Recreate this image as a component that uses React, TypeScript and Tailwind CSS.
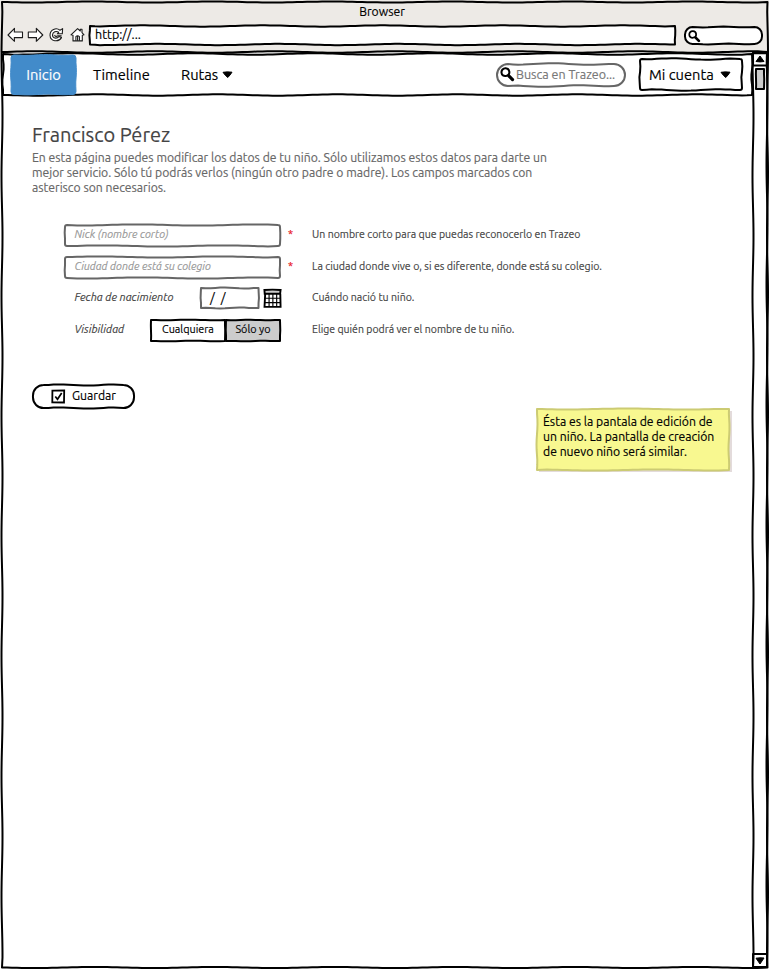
import type { ReactNode } from "react";

type SketchProps = {
  w: number;
  h: number;
  r?: number;
  amp?: number;
  seed?: number;
  stroke?: string;
  fill?: string;
  sw?: number;
};

// One hand-drawn side: sampled points that sway around the straight line.
function side(x1: number, y1: number, x2: number, y2: number, amp: number, seed: number): string {
  const len = Math.hypot(x2 - x1, y2 - y1);
  if (len < 1) return `L${x2} ${y2}`;
  const n = Math.max(2, Math.round(len / 5));
  const nx = -(y2 - y1) / len;
  const ny = (x2 - x1) / len;
  const wave = Math.min(120, Math.max(30, len * 0.7));
  let out = "";
  for (let i = 1; i <= n; i++) {
    const t = i / n;
    const taper = Math.min(1, (Math.min(t, 1 - t) * len) / 10);
    const o = Math.sin((t * len * 6.283) / wave + seed) * amp * taper;
    out += `L${(x1 + (x2 - x1) * t + nx * o).toFixed(2)} ${(y1 + (y2 - y1) * t + ny * o).toFixed(2)}`;
  }
  return out;
}

function framePath(w: number, h: number, r: number, amp: number, seed: number): string {
  const a = 1;
  const R = w - 1;
  const B = h - 1;
  const arc = r > 0 ? `A${r} ${r} 0 0 1 ` : "L";
  return (
    `M${a + r} ${a}` +
    side(a + r, a, R - r, a, amp, seed) +
    `${arc}${R} ${a + r}` +
    side(R, a + r, R, B - r, amp, seed + 2) +
    `${arc}${R - r} ${B}` +
    side(R - r, B, a + r, B, amp, seed + 4) +
    `${arc}${a} ${B - r}` +
    side(a, B - r, a, a + r, amp, seed + 1) +
    `${arc}${a + r} ${a}Z`
  );
}

function Sketch({ w, h, r = 0, amp = 0.7, seed = 0, stroke = "#000", fill = "none", sw = 2 }: SketchProps) {
  return (
    <svg className="pointer-events-none absolute inset-0 overflow-visible" width={w} height={h}>
      <path d={framePath(w, h, r, amp, seed)} fill={fill} stroke={stroke} strokeWidth={sw} strokeLinejoin="round" />
    </svg>
  );
}

function Caret() {
  return (
    <svg width="11" height="8" viewBox="0 0 11 8" className="shrink-0">
      <path d="M1 1.300Q5 .5 10 1.200L8 4 5.800 6.500 3.500 4.500Z" stroke="#000" strokeLinejoin="round" />
    </svg>
  );
}

function Magnifier({ size }: { size: number }) {
  return (
    <svg width={size} height={size} viewBox="0 0 14 14" className="shrink-0">
      <path d="M5.400 1.200C2.800 1 1.200 3 1.400 5.200 1.600 7.600 3.400 8.600 5.600 8.300 8 8 9 6.300 8.700 4.300 8.400 2.200 7.200 1.300 5.400 1.200Z" fill="none" stroke="#000" strokeWidth="1.900" />
      <path d="M8.200 8.200 11.700 11.700" stroke="#000" strokeWidth="3" strokeLinecap="round" />
    </svg>
  );
}

function ToolbarIcon({ children, className }: { children: ReactNode; className: string }) {
  return (
    <svg width="17" height="16" viewBox="0 0 17 16" fill="none" stroke="#1c1c1c" strokeWidth="1.100" strokeLinejoin="round" className={className}>
      {children}
    </svg>
  );
}

function Toolbar() {
  return (
    <div className="flex h-[22px] items-center">
      <ToolbarIcon className="ml-[7px]">
        <path d="M1 8 7.500 1.300 7.300 5H15.500V10.600H7.300L7.500 14.300Z" fill="#fff" />
      </ToolbarIcon>
      <ToolbarIcon className="ml-[3px]">
        <path d="M15.800 8 9.300 1.300 9.500 5H1.300V10.600H9.500L9.300 14.300Z" fill="#fff" />
      </ToolbarIcon>
      <ToolbarIcon className="ml-[4px]">
        <path d="M12 3.200 14.600 1.600 14.300 6.800H9.400L10.700 5.300C8.200 3.600 4.700 4.800 4.500 8 4.500 11.300 8.500 12.300 11 9.600L13.500 10.600C10.600 15.600 2.300 14.600 2 8.200 2 2.400 8.200 .2 12 3.200Z" fill="#fff" />
        <path d="M6.500 8.200C6.900 9.500 8.500 9.700 9.700 8.900H13.600" />
      </ToolbarIcon>
      <ToolbarIcon className="ml-[4px]">
        <path d="M2 7.800 8.600 1.600 11.300 4V2.300H13V5.700L15 7.800 13.300 8.300V13.900H4V8.200Z" fill="#fff" />
        <path d="M6.900 13.700V9.600Q8.600 7.900 10.400 9.600V13.700M8.600 9.300V13.700" />
      </ToolbarIcon>
      <div className="relative ml-[3px] h-[20px] w-[587px]">
        <Sketch w={587} h={20.5} amp={0.65} fill="#fff" seed={2} />
        <span className="relative ml-[6px] block text-[12.500px] leading-[18px]">http://...</span>
      </div>
      <div className="relative ml-[8px] flex h-[19px] w-[79px] items-center pt-[2px] pl-[4px]">
        <Sketch w={79} h={19} r={7.5} amp={0.4} fill="#fff" />
        <span className="relative flex">
          <Magnifier size={13} />
        </span>
      </div>
    </div>
  );
}

function NavBar() {
  return (
    <div className="relative flex h-[43px] w-[751px] items-center text-[14.700px]">
      <Sketch w={751} h={43} amp={0.7} seed={1} />
      <div className="relative ml-[8px] flex h-[42px] w-[67px] items-center justify-center pt-px text-white">
        <Sketch w={67} h={41.5} r={3} amp={0.4} fill="#428bca" stroke="#428bca" sw={1} />
        <span className="relative">Inicio</span>
      </div>
      <span className="ml-[16px] w-[88px] pt-[1px]">Timeline</span>
      <span className="w-[41px] pt-[1px]">Rutas</span>
      <Caret />
      <div className="relative ml-[263px] flex h-[24px] w-[130px] items-center pl-[4px] text-[12.500px] text-[#777]">
        <Sketch w={130} h={24} r={11} amp={0.8} stroke="#666" seed={1} />
        <span className="relative flex">
          <Magnifier size={15} />
        </span>
        <span className="ml-[1px]">Busca en Trazeo...</span>
      </div>
      <div className="relative ml-[13px] flex h-[33px] w-[104px] items-center pl-[10px]">
        <Sketch w={104} h={33} r={2} amp={0.7} seed={2} />
        <span className="w-[71px] pt-[1px]">Mi cuenta</span>
        <Caret />
      </div>
    </div>
  );
}

function ScrollBar() {
  return (
    <div className="relative flex h-[916px] w-[16px] flex-col justify-between">
      <Sketch w={16} h={916} amp={0.5} />
      <div className="flex flex-col items-center">
        <div className="relative flex h-[14px] w-[16px] items-center justify-center">
          <Sketch w={16} h={14.5} amp={0.2} />
          <svg width="10" height="8" viewBox="0 0 10 8">
            <path d="M5 1 9 6.500Q5 7.300 1 6.500Z" stroke="#000" strokeLinejoin="round" />
          </svg>
        </div>
        <div className="relative mt-[2px] h-[22px] w-[10px]">
          <Sketch w={10} h={22} amp={0.3} fill="#ccc" />
        </div>
      </div>
      <div className="relative flex h-[15px] w-[16px] items-center justify-center">
        <Sketch w={16} h={15} amp={0.2} />
        <svg width="10" height="8" viewBox="0 0 10 8">
          <path d="M1 1.200Q5 .5 9 1L5 7Z" stroke="#000" strokeLinejoin="round" />
        </svg>
      </div>
    </div>
  );
}

function CalendarIcon() {
  return (
    <svg width="19" height="21" viewBox="0 0 20 21" className="mt-px ml-[3px]">
      <path d="M1.500 1.500Q10 .8 18.500 1.500L18.200 5.500H1.800Z" fill="#ccc" />
      <path d="M1.500 1.500Q10 .8 18.500 1.500L18 5.500H1.800ZM2.300 5.500 1.600 19.200 18.500 19.300 18.200 5.500" fill="none" stroke="#000" strokeWidth="2" />
      <path d="M2 10.200H18M2 14.800H18M6.400 5.500V19M10.400 5.500V19M14.400 5.500V19" stroke="#000" strokeWidth="1.200" />
    </svg>
  );
}

function TextField({ text, seed }: { text: string; seed: number }) {
  return (
    <>
      <div className="relative h-[23px] w-[217px]">
        <Sketch w={217} h={23} r={2} amp={0.6} stroke="#666" seed={seed} />
        <span className="relative block pl-[10.500px] text-[10.800px] leading-[20px] text-[#999] italic">{text}</span>
      </div>
      <span className="ml-[7px] w-[24px] leading-[20px] text-red-600">*</span>
    </>
  );
}

function Form() {
  return (
    <div className="mt-[29px] ml-[62px] flex flex-col text-[10.600px] whitespace-nowrap text-[#444]">
      <div className="flex h-[32px] items-start">
        <TextField text="Nick (nombre corto)" seed={1} />
        <span className="text-[10.550px] leading-[21px]">Un nombre corto para que puedas reconocerlo en Trazeo</span>
      </div>
      <div className="flex h-[31px] items-start">
        <TextField text="Ciudad donde está su colegio" seed={3} />
        <span className="leading-[21px]">La ciudad donde vive o, si es diferente, donde está su colegio.</span>
      </div>
      <div className="flex h-[32px] items-start">
        <span className="w-[136px] pl-[10.500px] text-[11px] leading-[21px] italic">Fecha de nacimiento</span>
        <div className="relative h-[22px] w-[60px]">
          <Sketch w={59.5} h={22} amp={0.5} stroke="#666" seed={1} />
          <span className="relative block pl-[10px] text-[13px] leading-[22px] whitespace-pre text-black">/  /</span>
        </div>
        <CalendarIcon />
        <span className="ml-[30px] leading-[21px]">Cuándo nació tu niño.</span>
      </div>
      <div className="flex h-[32px] items-start">
        <span className="w-[86px] pl-[10.500px] text-[11px] leading-[21px] italic">Visibilidad</span>
        <div className="relative flex h-[23px] w-[131px] text-[10.800px] text-black">
          <div className="relative h-[23px] w-[76px] text-center leading-[21px]">
            <Sketch w={76} h={23} amp={0.3} />
            <span className="relative">Cualquiera</span>
          </div>
          <div className="relative -ml-px h-[23px] w-[56px] text-center leading-[21px]">
            <Sketch w={56} h={23} amp={0.3} fill="#ccc" seed={1} />
            <span className="relative">Sólo yo</span>
          </div>
        </div>
        <span className="ml-[31px] text-[10.500px] leading-[21px]">Elige quién podrá ver el nombre de tu niño.</span>
      </div>
    </div>
  );
}

export default function App() {
  return (
    <div className="relative flex h-[969px] w-[769px] flex-col overflow-hidden bg-white font-['Ubuntu','Noto_Sans',sans-serif] text-black [-webkit-text-stroke:0.15px]">
      <header className="h-[52px] bg-[#edeae6]">
        <div className="flex h-[24px] justify-center pr-[5px] text-[12.200px] leading-[24px]">Browser</div>
        <Toolbar />
      </header>
      <div className="relative flex h-[917px] w-[768px] pl-[2px]">
        <svg className="absolute -top-1 left-0 overflow-visible" width="769" height="6">
          <path d={`M2 4${side(2, 4, 768, 4, 0.7, 3)}`} fill="none" stroke="#000" strokeWidth="2" />
        </svg>
        <main className="flex w-[750px] flex-col">
          <div className="h-px" />
          <NavBar />
          <h1 className="mt-[25px] ml-[30px] text-[20px] leading-[28px] text-[#444]">Francisco Pérez</h1>
          <p className="mt-[1px] ml-[30px] text-[12.180px] leading-[15px] whitespace-nowrap text-[#666]">
            En esta página puedes modificar los datos de tu niño. Sólo utilizamos estos datos para darte un
            <br />
            mejor servicio. Sólo tú podrás verlos (ningún otro padre o madre). Los campos marcados con
            <br />
            asterisco son necesarios.
          </p>
          <Form />
          <button className="relative mt-[33px] ml-[30px] flex h-[25px] w-[103px] items-center pl-[19px] text-[12.200px]">
            <Sketch w={103} h={25} r={10.5} amp={0.6} seed={3} />
            <svg width="15" height="15" viewBox="0 0 15 15" className="mr-[6px]">
              <path d="M1.400 1.700 13.200 1.400 13 13.500 1.300 13.300Z" fill="none" stroke="#000" strokeWidth="1.800" />
              <path d="M4.300 7.500 6.500 10.300 10.700 4" fill="none" stroke="#000" strokeWidth="1.700" />
            </svg>
            Guardar
          </button>
          <aside className="relative -mt-px ml-[534px] h-[64px] w-[195px] pt-[6px] pl-[7px] text-[12.200px] leading-[15px] whitespace-nowrap">
            <div className="absolute top-[3px] left-[3px] h-[61px] w-[193px] bg-[#e3dbdb]" />
            <Sketch w={194} h={63} amp={0.5} fill="#f8f890" stroke="#cccb73" />
            <span className="relative block">
              Ésta es la pantala de edición de
              <br />
              un niño. La pantalla de creación
              <br />
              de nuevo niño será similar.
            </span>
          </aside>
        </main>
        <ScrollBar />
      </div>
      <div className="pointer-events-none absolute top-px left-px">
        <Sketch w={767.5} h={967.5} amp={0.5} />
      </div>
    </div>
  );
}
